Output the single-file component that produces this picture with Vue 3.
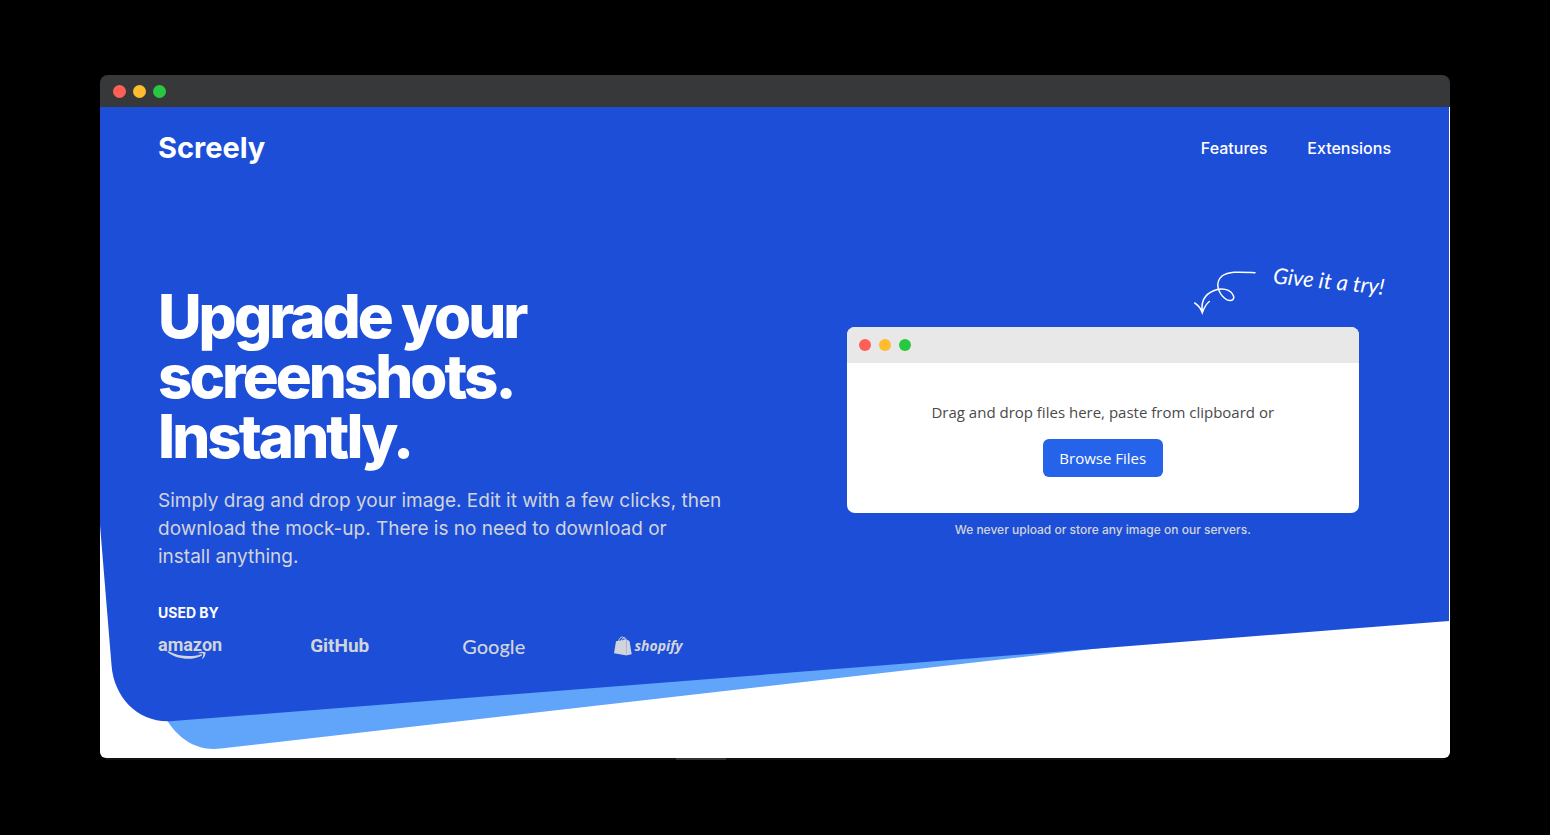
<script setup>
const dots = ['red', 'amber', 'green']
const links = ['Features', 'Extensions']
</script>

<template>
  <main class="stage">
    <div class="window">
      <div class="titlebar">
        <span v-for="dot in dots" :key="dot" class="dot" :class="dot"></span>
      </div>

      <div class="page">
        <svg class="backdrop" viewBox="0 0 1349 651" preserveAspectRatio="none" aria-hidden="true">
          <path fill="#60a5fa" d="M60 600C72 627 92 645 121 641.500L1010 540V480H60Z" />
          <path fill="#1d4ed8" d="M0 0V418L11.500 558C14 592 40 617 73 614L1349 514V0Z" />
        </svg>

        <header class="header">
          <a class="brand" href="#">Screely</a>
          <nav class="nav">
            <a v-for="link in links" :key="link" href="#">{{ link }}</a>
          </nav>
        </header>

        <section class="hero">
          <div class="intro">
            <h1>Upgrade your screenshots. Instantly.</h1>
            <p class="lead">Simply drag and drop your image. Edit it with a few clicks, then download the mock-up. There is no need to download or <span class="keep">install anything.</span></p>
            <h2>USED BY</h2>
            <ul class="logos">
              <li class="amazon">
                <span>amazon</span>
                <svg class="smile" width="48" height="10" viewBox="0 0 48 10" aria-hidden="true">
                  <path d="M1 1C12 7 25 7 33.500 4.500 35 4 35.500 5 34.500 5.700 26 10.500 10 10 .5 2Z" />
                  <path d="M30.500 3.200C32.500 1.500 37 1.200 38.500 2.200 39 4 37.500 7.500 35.500 9 34.900 8.800 35.200 8.200 35.500 7.500 36.200 5.500 36.700 4.200 36.200 3.700 35.200 3 32.500 3.500 30.500 3.200Z" />
                </svg>
              </li>
              <li class="github"><span>GitHub</span></li>
              <li class="google"><span>Google</span></li>
              <li class="shopify">
                <svg width="18" height="20" viewBox="0 0 18 20" aria-hidden="true">
                  <path d="M2 5.300 12.500 3.400 12.900 19.500 0 17.200Z" />
                  <path d="M12.500 3.500 15.500 5 17.700 18.300 13 19.300Z" />
                  <path class="handle" d="M4.500 5.500C5 2.500 7 .8 8.500 1 10 1.300 10.300 3 10.300 4.500M7.500 5C7.700 2.800 9.500 1 11 1.800 11.800 2.300 12 3.200 12 4" />
                </svg>
                <span>shopify</span>
              </li>
            </ul>
          </div>

          <div class="upload">
            <div class="card">
              <div class="hint">
                <svg width="68" height="52" viewBox="0 0 68 52" aria-hidden="true">
                  <path d="M65 7.700C50 7 39 6 32 11C24 18 29 29 35 33.500C40 37.500 45 35 43.500 31C41 24 31 22 23 26C14 30 11 38 12.300 47M4.700 38C8 40 11 44 12.300 47.700C14 43 16 39 19.300 36.500" />
                </svg>
                <span>Give it a try!</span>
              </div>
              <div class="card-bar">
                <span v-for="dot in dots" :key="dot" class="dot" :class="dot"></span>
              </div>
              <div class="drop">
                <p>Drag and drop files here, paste from clipboard or</p>
                <button type="button">Browse Files</button>
              </div>
            </div>
            <p class="note">We never upload or store any image on our servers.</p>
          </div>
        </section>
      </div>
      <div class="edge"><div class="handlebar"></div></div>
    </div>
  </main>
</template>

<style>
body {
  margin: 0;
  background: #000;
}
</style>

<style scoped>
* {
  box-sizing: border-box;
}
h1, h2, p, ul {
  margin: 0;
  padding: 0;
}
a {
  color: inherit;
  text-decoration: none;
}
.stage {
  padding: 75px 100px;
  font-family: Inter, "Liberation Sans", sans-serif;
  color: #fff;
}
.titlebar {
  display: flex;
  align-items: center;
  gap: 7px;
  height: 32px;
  padding: 1px 13px 0;
  background: #373839;
  border-radius: 8px 8px 0 0;
}
.dot {
  width: 13px;
  height: 13px;
  border-radius: 50%;
}
.red { background: #ff5f57; }
.amber { background: #febc2e; }
.green { background: #28c840; }
.page {
  position: relative;
  padding: 0 59px 98px 58px;
  background: #fff;
  border-radius: 0 0 6px 6px;
  overflow: hidden;
}
.backdrop {
  position: absolute;
  top: 0;
  left: 0;
  width: calc(100% - 1px);
  height: 100%;
}
.header {
  position: relative;
  display: flex;
  align-items: center;
  justify-content: space-between;
  height: 82px;
}
.brand {
  font-size: 29px;
  line-height: 36px;
  font-weight: 700;
}
.nav {
  display: flex;
  gap: 40px;
  font-size: 16px;
  line-height: 24px;
  font-weight: 500;
}
.hero {
  position: relative;
  display: grid;
  grid-template-columns: 1fr 1fr;
  gap: 80px;
  padding-top: 97px;
}
h1 {
  max-width: 440px;
  font-size: 60px;
  line-height: 60px;
  font-weight: 800;
  letter-spacing: -3px;
}
.lead {
  margin-top: 21px;
  font-size: 19px;
  line-height: 28px;
  color: #d1d5db;
}
.keep {
  white-space: nowrap;
}
h2 {
  margin-top: 32px;
  font-size: 14px;
  line-height: 20px;
  font-weight: 700;
}
.logos {
  display: grid;
  grid-template-columns: repeat(4, 1fr);
  gap: 32px;
  margin-top: 9px;
  list-style: none;
  color: #d1d5db;
  font-family: Roboto, "Liberation Sans", sans-serif;
  font-weight: 700;
  line-height: 24px;
}
.logos li {
  position: relative;
  display: flex;
  align-items: center;
  height: 28px;
  white-space: nowrap;
}
.logos svg {
  fill: #d1d5db;
}
.amazon {
  font-size: 18px;
}
.amazon span {
  padding-bottom: 3px;
}
.smile {
  position: absolute;
  left: 9px;
  bottom: 0;
}
.github {
  font-size: 19px;
}
.google {
  font-family: Lato, sans-serif;
  font-size: 20px;
  font-weight: 500;
}
.shopify {
  gap: 2px;
  font-family: "Open Sans", "Noto Sans", sans-serif;
  font-size: 14px;
  font-style: italic;
}
.shopify .handle {
  fill: none;
  stroke: #d1d5db;
  stroke-width: 1;
}
.upload {
  padding-top: 41px;
}
.card {
  position: relative;
  max-width: 512px;
  margin: 0 auto;
  border-radius: 8px;
  background: #fff;
}
.card-bar {
  display: flex;
  align-items: center;
  gap: 8px;
  height: 36px;
  padding: 0 12px;
  background: #e8e8e8;
  border-radius: 8px 8px 0 0;
}
.card-bar .dot {
  width: 12px;
  height: 12px;
}
.drop {
  display: flex;
  flex-direction: column;
  align-items: center;
  gap: 15px;
  padding: 37px 16px 36px;
  font-family: "Open Sans", "Noto Sans", sans-serif;
  font-size: 15px;
  line-height: 24px;
  color: #4a4a4a;
}
.drop button {
  width: 120px;
  height: 38px;
  padding: 0;
  border: 0;
  border-radius: 6px;
  background: #2563eb;
  color: #fff;
  font: inherit;
  cursor: pointer;
}
.hint {
  position: absolute;
  right: -26px;
  bottom: 100%;
  display: flex;
  gap: 15px;
  height: 62px;
  font-family: "Segoe Print", "Bradley Hand", Lato, cursive;
  font-size: 22px;
  line-height: 24px;
  font-style: italic;
  white-space: nowrap;
}
.hint svg {
  fill: none;
  stroke: #fff;
  stroke-width: 1.500;
  stroke-linecap: round;
}
.hint span {
  height: 24px;
  margin-top: 4px;
  transform: rotate(6deg);
}
.note {
  margin-top: 9px;
  font-size: 12px;
  line-height: 16px;
  font-weight: 500;
  text-align: center;
  color: #d1d5db;
}
.edge {
  height: 2px;
  margin: 0 6px;
  background: #111;
}
.handlebar {
  width: 50px;
  height: 2px;
  margin-left: calc(50% - 99px);
  background: #333;
}
</style>
